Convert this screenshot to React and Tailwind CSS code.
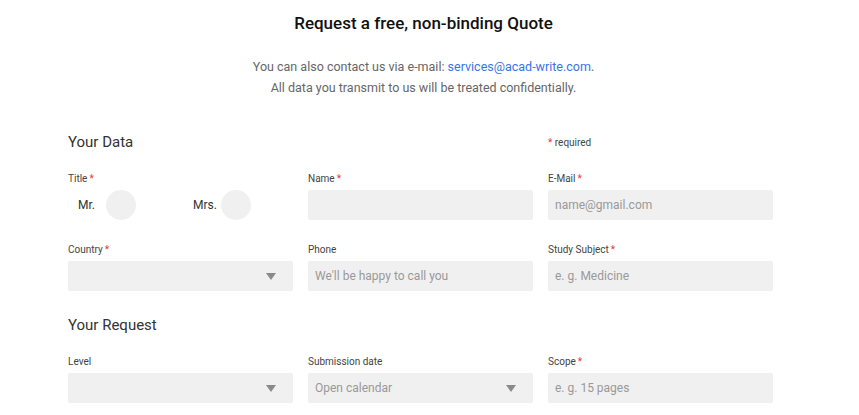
import React from 'react';

const Req = () => <span className="text-[#e53935] ml-[2px]">*</span>;

const Label = ({ children, req }) => (
    <div className="h-[14px] leading-[14px] text-[10px] text-[#444] mb-[4px]">
        {children}
        {req && <Req />}
    </div>
);

const Input = ({ placeholder }) => (
    <div className="h-[30px] bg-[#f0f0f0] rounded-[2px] flex items-center px-[7px] text-[12px] text-[#999]">
        {placeholder}
    </div>
);

const Select = ({ placeholder }) => (
    <div className="h-[30px] bg-[#f0f0f0] rounded-[2px] flex items-center justify-between pl-[7px] pr-[17px] text-[12px] text-[#999]">
        <span>{placeholder}</span>
        <svg width="10" height="7" viewBox="0 0 10 7">
            <path d="M0 0 L10 0 L5 7 Z" fill="#8a8a8a" />
        </svg>
    </div>
);

const Field = ({ label, req, children }) => (
    <div className="flex flex-col">
        <Label req={req}>{label}</Label>
        {children}
    </div>
);

const Radio = ({ label }) => (
    <div className="flex items-center">
        <span className="text-[12px] text-[#333] w-[38px] pl-[10px]">{label}</span>
        <span className="w-[30px] h-[30px] rounded-full bg-[#f0f0f0]"></span>
    </div>
);

export default function App() {
    return (
        <div className="w-[842px] bg-white" style={{ fontFamily: 'Roboto, "Liberation Sans", sans-serif' }}>
            <div className="w-[847px] pt-[12px] text-center">
                <h1 className="text-[17px] leading-[22px] font-medium text-[#111]">Request a free, non-binding Quote</h1>
                <p className="mt-[22px] text-[12.5px] leading-[21px] text-[#666]">
                    You can also contact us via e-mail: <span className="text-[#3b73e8]">services@acad-write.com</span>.
                    <br />
                    All data you transmit to us will be treated confidentially.
                </p>
            </div>

            <div className="w-[705px] ml-[68px]">
                <div className="mt-[32px] flex items-center justify-between h-[24px]">
                    <h2 className="text-[15px] text-[#333]">Your Data</h2>
                    <div className="w-[225px] text-[10px] text-[#444]"><span className="text-[#e53935]">*</span> required</div>
                </div>

                <div className="mt-[18px] grid grid-cols-3 gap-x-[15px] gap-y-[23px]">
                    <Field label="Title" req>
                        <div className="flex h-[30px] gap-[47px]">
                            <Radio label="Mr." />
                            <Radio label="Mrs." />
                        </div>
                    </Field>
                    <Field label="Name" req><Input /></Field>
                    <Field label="E-Mail" req><Input placeholder="name@gmail.com" /></Field>
                    <Field label="Country" req><Select /></Field>
                    <Field label="Phone"><Input placeholder="We'll be happy to call you" /></Field>
                    <Field label="Study Subject" req><Input placeholder="e. g. Medicine" /></Field>
                </div>

                <h2 className="mt-[22px] h-[24px] leading-[24px] text-[15px] text-[#333]">Your Request</h2>

                <div className="mt-[18px] grid grid-cols-3 gap-x-[15px]">
                    <Field label="Level"><Select /></Field>
                    <Field label="Submission date"><Select placeholder="Open calendar" /></Field>
                    <Field label="Scope" req><Input placeholder="e. g. 15 pages" /></Field>
                </div>
            </div>
        </div>
    );
}
